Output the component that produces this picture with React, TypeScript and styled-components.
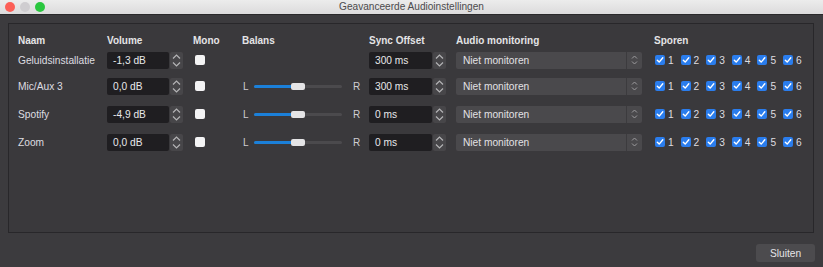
import React from 'react'
import styled, { createGlobalStyle } from 'styled-components'

const GlobalStyle = createGlobalStyle`
  html, body {
    margin: 0;
    padding: 0;
    background: #3c3b3e;
  }
  body {
    font-family: "Liberation Sans", Arial, Helvetica, sans-serif;
  }
`

interface SourceRow {
  name: string
  volume: string
  balance: boolean
  sync: string
  top: number
}

const rows: SourceRow[] = [
  { name: 'Geluidsinstallatie', volume: '-1,3 dB', balance: false, sync: '300 ms', top: 0 },
  { name: 'Mic/Aux 3', volume: '0,0 dB', balance: true, sync: '300 ms', top: 6 },
  { name: 'Spotify', volume: '-4,9 dB', balance: true, sync: '0 ms', top: 8 },
  { name: 'Zoom', volume: '0,0 dB', balance: true, sync: '0 ms', top: 8 },
]

const tracks = [1, 2, 3, 4, 5, 6]

const Stepper = () => (
  <StepperBox>
    <svg width="13" height="17" viewBox="0 0 13 17">
      <path d="M3 6.5 L6.5 3 L10 6.5" fill="none" stroke="#b4b4b6" strokeWidth="1.2" />
      <path d="M3 10.5 L6.5 14 L10 10.5" fill="none" stroke="#b4b4b6" strokeWidth="1.2" />
    </svg>
  </StepperBox>
)

const SpinBox: React.FC<{ value: string; width: number }> = ({ value, width }) => (
  <SpinWrap>
    <SpinInput $width={width}>{value}</SpinInput>
    <Stepper />
  </SpinWrap>
)

const BalanceSlider = () => (
  <SliderWrap>
    <SideLabel>L</SideLabel>
    <Track>
      <TrackFill />
      <Thumb />
    </Track>
    <SideLabel>R</SideLabel>
  </SliderWrap>
)

const Check = () => (
  <BlueBox>
    <svg width="10" height="10" viewBox="0 0 10 10">
      <path d="M2.3 5.2 L4.2 7.1 L7.8 2.8" fill="none" stroke="#fff" strokeWidth="1.4" strokeLinecap="round" strokeLinejoin="round" />
    </svg>
  </BlueBox>
)

const App = () => {
  return (
    <>
      <GlobalStyle />
      <Window>
        <TitleBar>
          <Lights>
            <Light $color="#fc5f57" />
            <Light $color="#cfcdd0" />
            <Light $color="#2ac73f" />
          </Lights>
          <Title>Geavanceerde Audioinstellingen</Title>
        </TitleBar>
        <Body>
          <Panel>
            <Row $top={0}>
              <Head>Naam</Head>
              <Head>Volume</Head>
              <Head>Mono</Head>
              <Head>Balans</Head>
              <Head>Sync Offset</Head>
              <Head>Audio monitoring</Head>
              <Head>Sporen</Head>
            </Row>
            {rows.map((row) => (
              <Row key={row.name} $top={row.top}>
                <Name>{row.name}</Name>
                <SpinBox value={row.volume} width={62} />
                <Cell>
                  <MonoBox />
                </Cell>
                <Cell>{row.balance && <BalanceSlider />}</Cell>
                <SpinBox value={row.sync} width={63} />
                <Combo>
                  <ComboText>Niet monitoren</ComboText>
                  <ComboArrows>
                    <svg width="9" height="12" viewBox="0 0 9 12">
                      <path d="M2 4.5 L4.5 2 L7 4.5" fill="none" stroke="#9d9c9f" strokeWidth="1" />
                      <path d="M2 7.5 L4.5 10 L7 7.5" fill="none" stroke="#9d9c9f" strokeWidth="1" />
                    </svg>
                  </ComboArrows>
                </Combo>
                <Tracks>
                  {tracks.map((t) => (
                    <TrackItem key={t}>
                      <Check />
                      <TrackNum>{t}</TrackNum>
                    </TrackItem>
                  ))}
                </Tracks>
              </Row>
            ))}
          </Panel>
          <Footer>
            <Button>Sluiten</Button>
          </Footer>
        </Body>
      </Window>
    </>
  )
}

export default App

// Styled-components
const Window = styled.div`
  width: 823px;
  height: 267px;
  display: flex;
  flex-direction: column;
  background: #3c3b3e;
  overflow: hidden;
`

const TitleBar = styled.div`
  height: 14px;
  flex: 0 0 14px;
  position: relative;
  display: flex;
  align-items: center;
  justify-content: center;
  background: linear-gradient(#ececec, #dcdbdc);
  border-bottom: 1px solid #2a292b;
`

const Lights = styled.div`
  position: absolute;
  left: 5px;
  top: 2px;
  display: flex;
  gap: 5px;
`

const Light = styled.span<{ $color: string }>`
  width: 10px;
  height: 10px;
  border-radius: 50%;
  background: ${(p) => p.$color};
`

const Title = styled.div`
  font-size: 10.1px;
  color: #4c4b4d;
  line-height: 14px;
`

const Body = styled.div`
  flex: 1;
  display: flex;
  flex-direction: column;
  padding: 8px 9px 0 8px;
`

const Panel = styled.div`
  height: 210px;
  box-sizing: border-box;
  border: 1px solid #28272a;
  background: #3a393c;
  padding: 6px 0 0 9px;
  display: flex;
  flex-direction: column;
`

const Row = styled.div<{ $top: number }>`
  display: grid;
  grid-template-columns: 89px 86px 49px 127px 87px 198px 1fr;
  align-items: center;
  height: 20px;
  margin-top: ${(p) => p.$top}px;
`

const Head = styled.div`
  font-size: 10px;
  font-weight: bold;
  color: #e4e4e6;
`

const Name = styled.div`
  font-size: 10.2px;
  color: #dedde0;
`

const Cell = styled.div`
  display: flex;
  align-items: center;
`

const SpinWrap = styled.div`
  display: flex;
  align-items: center;
  gap: 1px;
`

const SpinInput = styled.div<{ $width: number }>`
  width: ${(p) => p.$width}px;
  height: 17px;
  box-sizing: border-box;
  padding-left: 6px;
  background: #1f1e21;
  border-radius: 2px;
  color: #e8e8ea;
  font-size: 10.2px;
  line-height: 17px;
`

const StepperBox = styled.div`
  width: 13px;
  height: 17px;
  background: #474649;
  border-radius: 2px;
  display: flex;
`

const MonoBox = styled.span`
  width: 10px;
  height: 10px;
  margin-left: 2px;
  border-radius: 2px;
  background: #f4f4f5;
`

const SliderWrap = styled.div`
  display: flex;
  align-items: center;
`

const SideLabel = styled.span`
  font-size: 10px;
  color: #cfced1;
  width: 11px;
  padding-left: 1px;
`

const Track = styled.div`
  position: relative;
  width: 88px;
  height: 3px;
  margin-right: 10px;
  border-radius: 2px;
  background: #4b4a4d;
`

const TrackFill = styled.div`
  position: absolute;
  left: 0;
  top: 0;
  width: 40px;
  height: 3px;
  border-radius: 2px;
  background: #1b80d9;
`

const Thumb = styled.div`
  position: absolute;
  left: 37px;
  top: -2px;
  width: 14px;
  height: 7px;
  border-radius: 2px;
  background: #e4e4e6;
`

const Combo = styled.div`
  width: 186px;
  height: 17px;
  box-sizing: border-box;
  display: flex;
  align-items: center;
  background: #4a494c;
  border-radius: 2px;
`

const ComboText = styled.div`
  flex: 1;
  padding-left: 7px;
  font-size: 10.2px;
  color: #e2e1e4;
`

const ComboArrows = styled.div`
  width: 15px;
  height: 17px;
  display: flex;
  align-items: center;
  justify-content: center;
  border-left: 1px solid #3c3b3e;
`

const Tracks = styled.div`
  display: flex;
  align-items: center;
  padding-left: 1px;
`

const TrackItem = styled.div`
  width: 25.6px;
  display: flex;
  align-items: center;
  gap: 3px;
`

const BlueBox = styled.span`
  width: 10px;
  height: 10px;
  border-radius: 2px;
  background: #2a7ded;
  display: flex;
`

const TrackNum = styled.span`
  font-size: 10.2px;
  color: #dedde0;
`

const Footer = styled.div`
  display: flex;
  justify-content: flex-end;
  padding-top: 11px;
`

const Button = styled.div`
  width: 59px;
  height: 18px;
  display: flex;
  align-items: center;
  justify-content: center;
  background: #4c4b4e;
  border-radius: 3px;
  font-size: 10.2px;
  color: #e6e5e8;
  margin-right: -1px;
`
